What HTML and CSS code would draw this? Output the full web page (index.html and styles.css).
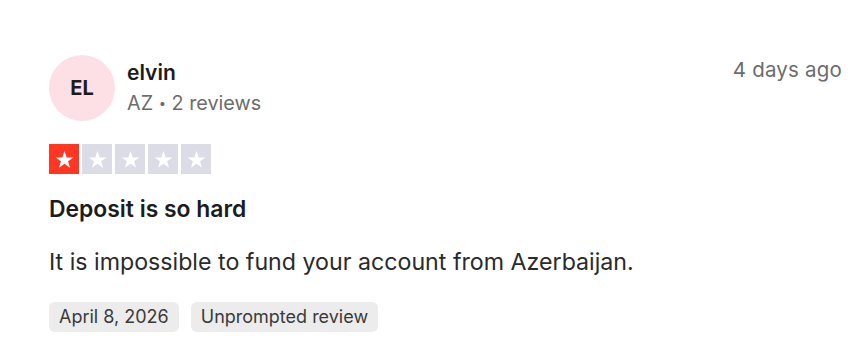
FILE: index.html
```html
<!DOCTYPE html>
<html lang="en">
<head>
<meta charset="utf-8">
<title>Review</title>
<link rel="stylesheet" href="styles.css">
</head>
<body>
<article class="review">
  <header class="review-head">
    <div class="consumer">
      <div class="avatar">EL</div>
      <div class="consumer-info">
        <div class="name">elvin</div>
        <div class="meta">AZ <span class="dot">•</span> 2 reviews</div>
      </div>
    </div>
    <time class="ago">4 days ago</time>
  </header>
  <div class="stars">
    <span class="star on"><svg viewBox="0 0 24 24"><path d="M12 3.2l2.3 6.6h7l-5.6 4.1 2.1 6.7L12 16.5l-5.8 4.1 2.1-6.7-5.6-4.1h7z"/></svg></span>
    <span class="star"><svg viewBox="0 0 24 24"><path d="M12 3.2l2.3 6.6h7l-5.6 4.1 2.1 6.7L12 16.5l-5.8 4.1 2.1-6.7-5.6-4.1h7z"/></svg></span>
    <span class="star"><svg viewBox="0 0 24 24"><path d="M12 3.2l2.3 6.6h7l-5.6 4.1 2.1 6.7L12 16.5l-5.8 4.1 2.1-6.7-5.6-4.1h7z"/></svg></span>
    <span class="star"><svg viewBox="0 0 24 24"><path d="M12 3.2l2.3 6.6h7l-5.6 4.1 2.1 6.7L12 16.5l-5.8 4.1 2.1-6.7-5.6-4.1h7z"/></svg></span>
    <span class="star"><svg viewBox="0 0 24 24"><path d="M12 3.2l2.3 6.6h7l-5.6 4.1 2.1 6.7L12 16.5l-5.8 4.1 2.1-6.7-5.6-4.1h7z"/></svg></span>
  </div>
  <h2 class="title">Deposit is so hard</h2>
  <p class="text">It is impossible to fund your account from Azerbaijan.</p>
  <div class="tags">
    <span class="tag">April 8, 2026</span>
    <span class="tag">Unprompted review</span>
  </div>
</article>
</body>
</html>
```
FILE: styles.css
```css
html, body {
  margin: 0;
  padding: 0;
  background: #ffffff;
}
body {
  font-family: Inter, "Noto Sans", sans-serif;
  color: #1c1c1c;
}
.review {
  padding: 55px 14px 0 49px;
}
.review-head {
  display: flex;
  justify-content: space-between;
  align-items: flex-start;
}
.consumer {
  display: flex;
  align-items: center;
  gap: 12px;
}
.avatar {
  width: 66px;
  height: 66px;
  border-radius: 50%;
  background: #fde0e6;
  display: flex;
  align-items: center;
  justify-content: center;
  font-size: 20px;
  font-weight: 700;
  color: #1c1c1c;
}
.consumer-info {
  display: flex;
  flex-direction: column;
  gap: 5px;
  margin-top: -2px;
}
.name {
  font-size: 21px;
  font-weight: 600;
  line-height: 26px;
}
.meta {
  font-size: 19.8px;
  color: #6c6c6c;
  line-height: 24px;
}
.dot {
  font-size: 13px;
  vertical-align: 2px;
}
.ago {
  font-size: 20.5px;
  color: #6c6c6c;
  line-height: 24px;
  margin-top: 3px;
  letter-spacing: 0.2px;
}
.stars {
  display: flex;
  gap: 3px;
  margin-top: 23px;
}
.star {
  width: 30px;
  height: 30px;
  background: #dcdce6;
  display: flex;
  align-items: center;
  justify-content: center;
}
.star.on {
  background: #ff3722;
}
.star svg {
  width: 23px;
  height: 23px;
  fill: #ffffff;
}
.title {
  margin: 22px 0 0;
  font-size: 22.9px;
  font-weight: 600;
  line-height: 26px;
}
.text {
  margin: 26px 0 0;
  font-size: 23.2px;
  line-height: 28px;
  color: #2a2a2a;
}
.tags {
  display: flex;
  gap: 12px;
  margin-top: 26px;
}
.tag {
  background: #ececec;
  border-radius: 6px;
  font-size: 18px;
  line-height: 30px;
  padding: 0 10px;
  color: #3a3a3a;
}
```
